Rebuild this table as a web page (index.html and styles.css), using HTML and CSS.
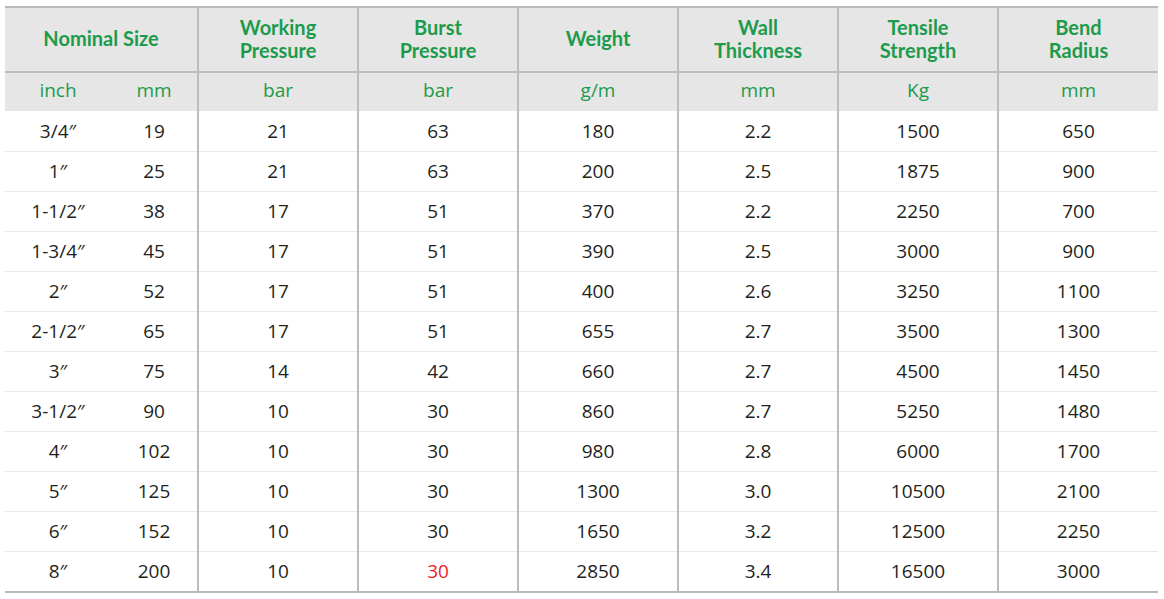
FILE: index.html
```html
<!DOCTYPE html>
<html>
<head>
<meta charset="utf-8">
<link rel="stylesheet" href="styles.css">
</head>
<body>
<table class="spec">
  <colgroup>
    <col class="c-inch"><col class="c-mm"><col class="c-std"><col class="c-std"><col class="c-std"><col class="c-std"><col class="c-std"><col class="c-std">
  </colgroup>
  <thead>
    <tr class="head-main">
      <th colspan="2" class="sep">Nominal Size</th>
      <th class="sep">Working<br>Pressure</th>
      <th class="sep">Burst<br>Pressure</th>
      <th class="sep">Weight</th>
      <th class="sep">Wall<br>Thickness</th>
      <th class="sep">Tensile<br>Strength</th>
      <th>Bend<br>Radius</th>
    </tr>
    <tr class="head-unit">
      <th>inch</th>
      <th class="sep">mm</th>
      <th class="sep">bar</th>
      <th class="sep">bar</th>
      <th class="sep">g/m</th>
      <th class="sep">mm</th>
      <th class="sep">Kg</th>
      <th>mm</th>
    </tr>
  </thead>
  <tbody>
    <tr><td>3/4″</td><td class="sep">19</td><td class="sep">21</td><td class="sep">63</td><td class="sep">180</td><td class="sep">2.2</td><td class="sep">1500</td><td>650</td></tr>
    <tr><td>1″</td><td class="sep">25</td><td class="sep">21</td><td class="sep">63</td><td class="sep">200</td><td class="sep">2.5</td><td class="sep">1875</td><td>900</td></tr>
    <tr><td>1-1/2″</td><td class="sep">38</td><td class="sep">17</td><td class="sep">51</td><td class="sep">370</td><td class="sep">2.2</td><td class="sep">2250</td><td>700</td></tr>
    <tr><td>1-3/4″</td><td class="sep">45</td><td class="sep">17</td><td class="sep">51</td><td class="sep">390</td><td class="sep">2.5</td><td class="sep">3000</td><td>900</td></tr>
    <tr><td>2″</td><td class="sep">52</td><td class="sep">17</td><td class="sep">51</td><td class="sep">400</td><td class="sep">2.6</td><td class="sep">3250</td><td>1100</td></tr>
    <tr><td>2-1/2″</td><td class="sep">65</td><td class="sep">17</td><td class="sep">51</td><td class="sep">655</td><td class="sep">2.7</td><td class="sep">3500</td><td>1300</td></tr>
    <tr><td>3″</td><td class="sep">75</td><td class="sep">14</td><td class="sep">42</td><td class="sep">660</td><td class="sep">2.7</td><td class="sep">4500</td><td>1450</td></tr>
    <tr><td>3-1/2″</td><td class="sep">90</td><td class="sep">10</td><td class="sep">30</td><td class="sep">860</td><td class="sep">2.7</td><td class="sep">5250</td><td>1480</td></tr>
    <tr><td>4″</td><td class="sep">102</td><td class="sep">10</td><td class="sep">30</td><td class="sep">980</td><td class="sep">2.8</td><td class="sep">6000</td><td>1700</td></tr>
    <tr><td>5″</td><td class="sep">125</td><td class="sep">10</td><td class="sep">30</td><td class="sep">1300</td><td class="sep">3.0</td><td class="sep">10500</td><td>2100</td></tr>
    <tr><td>6″</td><td class="sep">152</td><td class="sep">10</td><td class="sep">30</td><td class="sep">1650</td><td class="sep">3.2</td><td class="sep">12500</td><td>2250</td></tr>
    <tr><td>8″</td><td class="sep">200</td><td class="sep">10</td><td class="sep red">30</td><td class="sep">2850</td><td class="sep">3.4</td><td class="sep">16500</td><td>3000</td></tr>
  </tbody>
</table>
</body>
</html>
```

FILE: styles.css
```css
html, body {
  margin: 0;
  padding: 0;
  background: #ffffff;
}

body {
  padding: 6px 0 0 5px;
  font-family: "Open Sans", "Noto Sans", sans-serif;
}

.spec {
  border-collapse: collapse;
  table-layout: fixed;
  width: 1152px;
  border-top: 2px solid #b9b9b9;
  border-bottom: 2px solid #b9b9b9;
}

.c-inch { width: 106px; }
.c-mm { width: 87px; }
.c-std { width: 160px; }

.spec th,
.spec td {
  padding: 0;
  text-align: center;
  vertical-align: middle;
}

.spec .sep {
  border-right: 2px solid #bcbcbc;
}

.head-main th {
  height: 61px;
  padding-bottom: 2px;
  background: #e6e6e6;
  color: #1d9b4c;
  font-family: "Lato", "Open Sans", sans-serif;
  font-weight: 700;
  font-size: 20px;
  line-height: 23px;
  border-bottom: 2px solid #bdbdbd;
}

.head-unit th {
  height: 34px;
  padding-bottom: 4px;
  background: #e6e6e6;
  color: #1d9b4c;
  font-weight: 400;
  font-size: 19px;
}

.spec tbody td {
  height: 38px;
  padding-bottom: 1px;
  color: #231f20;
  font-size: 19px;
  border-top: 1px solid #e9e9e9;
}

.spec tbody tr:first-child td {
  border-top: none;
  height: 40px;
  padding-bottom: 0;
}

.spec td.red {
  color: #ee1c25;
}
```
